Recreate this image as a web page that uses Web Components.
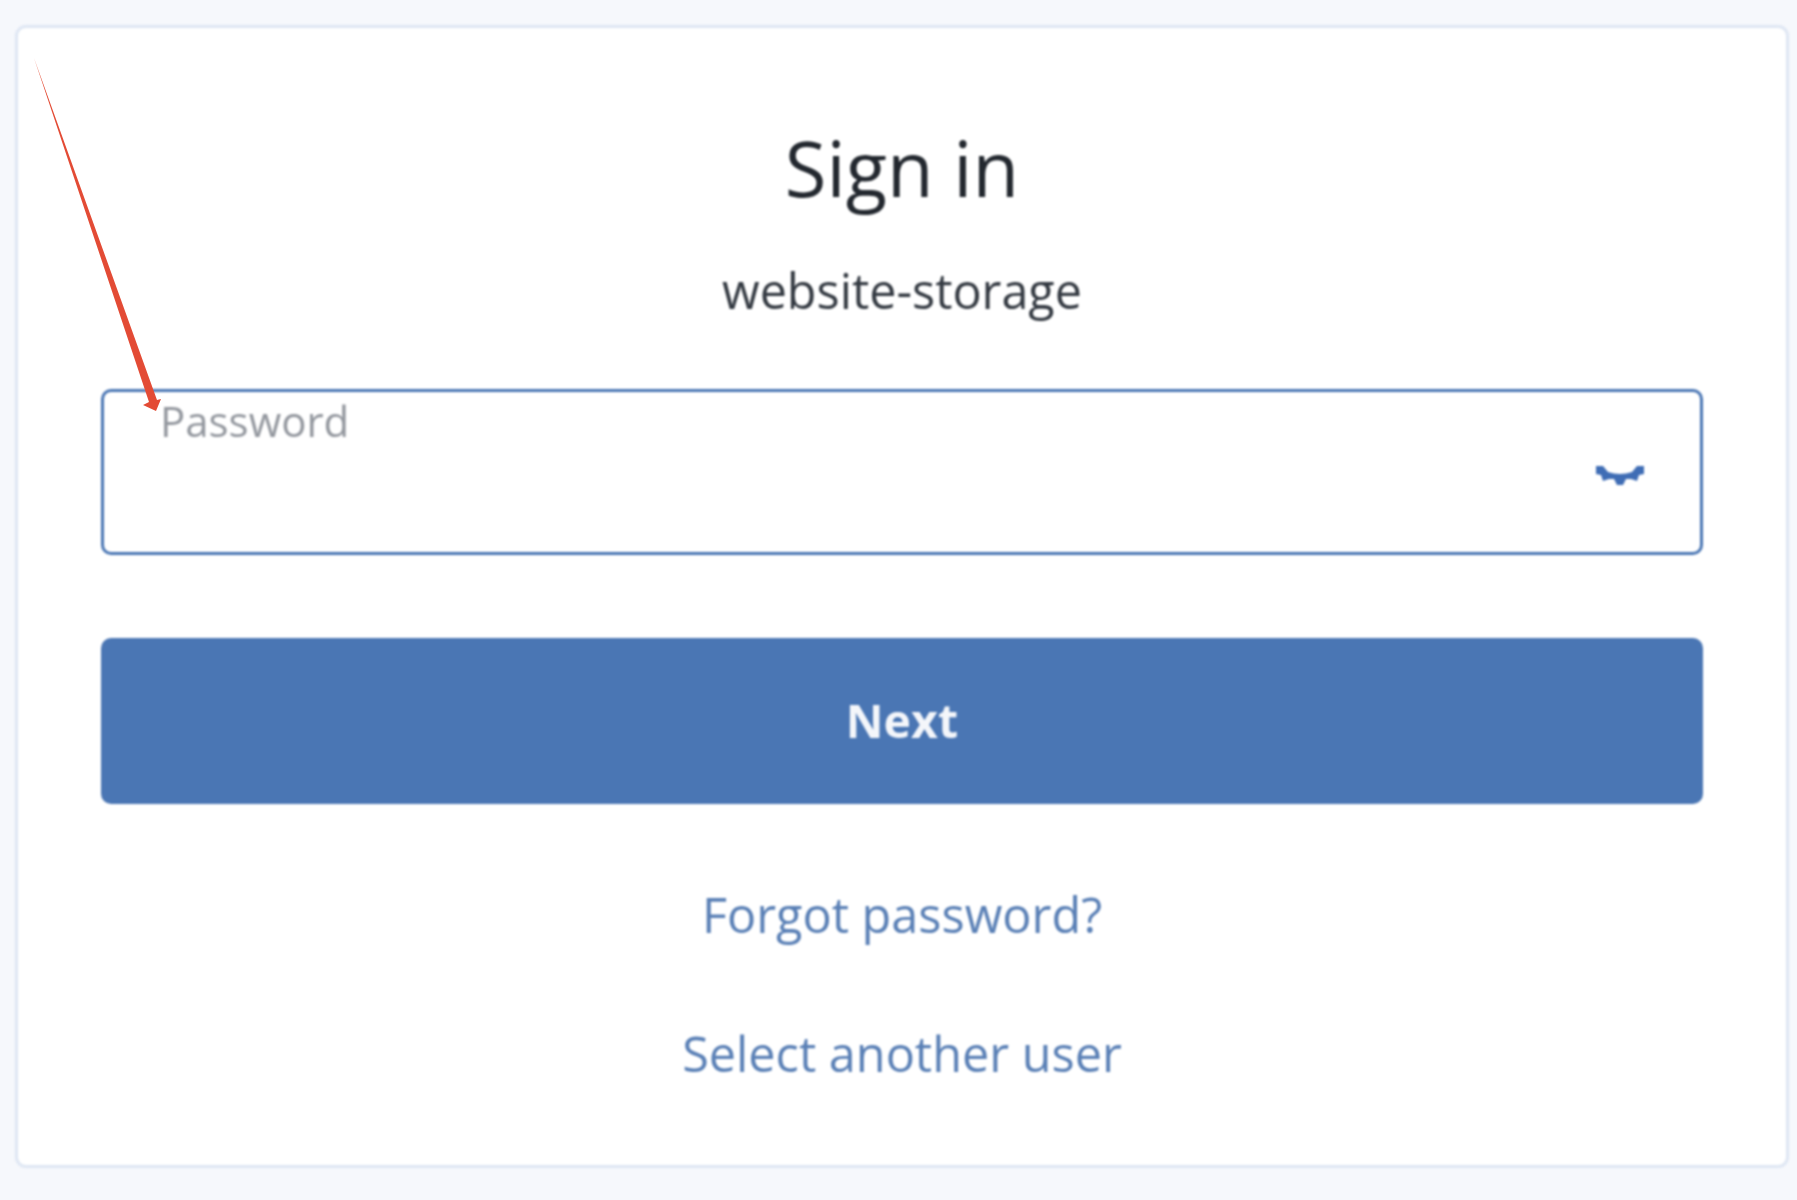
<!DOCTYPE html>
<html><head><meta charset="utf-8">
<style>
html,body{margin:0;padding:0;background:#f6f8fc;}
body{font-family:"Open Sans",sans-serif;}
</style></head><body>
<template id="t-page"><style>
:host{display:block;box-sizing:border-box;width:1797px;height:1200px;padding:25px 8px 32px 15px;background:#f6f8fc;position:relative;overflow:hidden}
.arrow{position:absolute;left:0;top:0;filter:blur(.5px)}
</style><slot></slot>
<svg class="arrow" width="200" height="430" viewBox="0 0 200 430"><polygon points="34,58 157,400 161,399 156,411 143,405 149,402" fill="#e34b35"/></svg>
</template>
<template id="t-card"><style>
:host{display:flex;flex-direction:column;align-items:stretch;box-sizing:border-box;height:100%;border:3px solid #dee6f3;border-radius:11px;background:#fff;padding:0 83px;filter:blur(.8px)}
</style><slot></slot></template>
<template id="t-heading"><style>
:host{display:block;text-align:center;color:#23282f}
h1{margin:92px 0 0;font:400 76px/96px "Open Sans",sans-serif}
p{margin:43px 0 0;font:400 48.5px/62px "Open Sans",sans-serif;color:#343a42}
</style><h1><slot name="title"></slot></h1><p><slot name="sub"></slot></p></template>
<template id="t-field"><style>
:host{display:flex;box-sizing:border-box;height:166px;margin-top:68px;border:3px solid #4a76b4;border-radius:10px;align-items:flex-start;justify-content:space-between;padding:0 55px 0 56px}
.l{font:400 42px/52px "Open Sans",sans-serif;color:#94989f;margin-top:3px}
svg{margin-top:72px}
</style><span class="l"><slot></slot></span>
<svg width="50" height="22" viewBox="0 0 50 22"><path d="M1 2 L8 2 L13 8 Q25 12 37 8 L42 2 L49 2 L49 10 L44 11 L42 17 L36 15 L31 15 L28 21 L22 21 L19 15 L14 15 L8 17 L6 11 L1 10 Z" fill="#3f6db5"/></svg>
</template>
<template id="t-btn"><style>
:host{display:flex;align-items:center;justify-content:center;height:166px;margin-top:83px;background:#4a76b4;border-radius:10px;color:#f4f6fa;font:700 46.5px/1 "Open Sans",sans-serif}
span{margin-top:-2px}
</style><span><slot></slot></span></template>
<template id="t-link"><style>
:host{display:block;text-align:center;color:#5a80b6;font:400 48.6px/62px "Open Sans",sans-serif;margin-top:var(--mt,59px)}
</style><slot></slot></template>
<x-page><x-card>
<x-heading><span slot="title">Sign in</span><span slot="sub">website-storage</span></x-heading>
<x-field>Password</x-field>
<x-btn>Next</x-btn>
<x-link style="--mt:79px">Forgot password?</x-link>
<x-link style="--mt:77px">Select another user</x-link>
</x-card></x-page>
<script>
for(const [n,t] of [['x-page','t-page'],['x-card','t-card'],['x-heading','t-heading'],['x-field','t-field'],['x-btn','t-btn'],['x-link','t-link']]){
customElements.define(n,class extends HTMLElement{constructor(){super();this.attachShadow({mode:'open'}).appendChild(document.getElementById(t).content.cloneNode(true));}});
}
</script>
</body></html>
